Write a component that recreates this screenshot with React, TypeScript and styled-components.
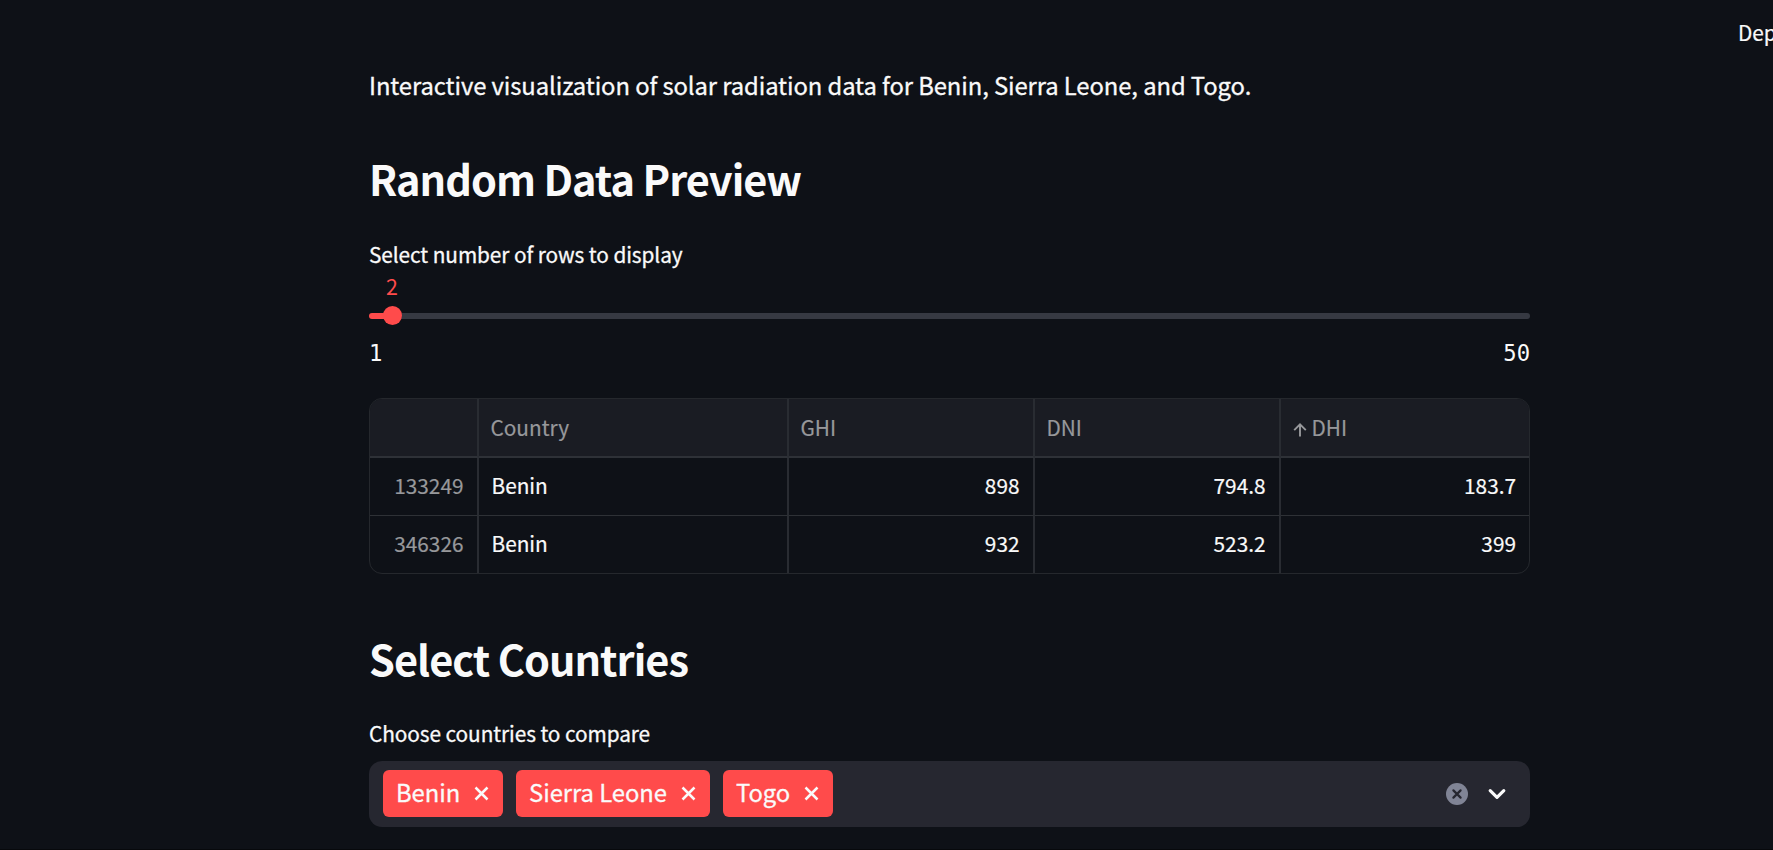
import React from "react";
import styled, { createGlobalStyle } from "styled-components";

const GlobalStyle = createGlobalStyle`
  *, *::before, *::after { box-sizing: border-box; }
  html { overflow: hidden; background: #0e1117; }
  body {
    margin: 0;
    background: #0e1117;
    color: #fafafa;
    font-family: "Noto Sans CJK SC", "Noto Sans", sans-serif;
    -webkit-text-stroke-width: 0.3px;
  }
`;

const Page = styled.div`
  height: 850px;
  overflow: hidden;
  border-bottom: 1px solid #07090c;
`;

const Header = styled.header`
  display: flex;
  justify-content: flex-end;
  height: 64px;
  padding-top: 16px;
`;

const DeployButton = styled.button`
  flex: none;
  width: 72px;
  height: 32px;
  margin-right: -37px;
  padding: 0;
  border: 0;
  background: none;
  color: #fafafa;
  font: 400 20.8px/32px "Noto Sans CJK SC", sans-serif;
  -webkit-text-stroke-width: 0.2px;
  text-align: left;
`;

const Main = styled.main`
  width: 1161px;
  margin-left: 369px;
`;

const Intro = styled.p`
  margin: 0;
  font-size: 23.8px;
  letter-spacing: -0.08px;
  line-height: 42px;
  white-space: nowrap;
`;

const Title = styled.h2<{ $top: number }>`
  margin: ${(p) => p.$top}px 0 0;
  font-size: 41.5px;
  font-weight: 600;
  letter-spacing: -0.97px;
  line-height: 56px;
  white-space: nowrap;
  -webkit-text-stroke-width: 0;
`;

const Field = styled.div<{ $top: number }>`
  margin-top: ${(p) => p.$top}px;
`;

const Label = styled.label`
  display: block;
  font-size: 20.8px;
  letter-spacing: -0.07px;
  line-height: 34px;
  white-space: nowrap;
`;

const SliderValue = styled.output`
  display: block;
  width: 46px;
  text-align: center;
  color: #ff4b4b;
  font-size: 21.4px;
  line-height: 30px;
  -webkit-text-stroke-width: 0;
`;

const Track = styled.div`
  display: flex;
  align-items: center;
  height: 6px;
  margin-top: 12px;
  border-radius: 3px;
  background: linear-gradient(to right, #ff4b4b 24px, #363942 24px);
`;

const Thumb = styled.div`
  width: 19px;
  height: 19px;
  flex: none;
  margin: -1px 0 0 14px;
  border-radius: 50%;
  background: #ff4b4b;
`;

const Bounds = styled.div`
  display: flex;
  justify-content: space-between;
  margin-top: 18px;
  font: 400 22.2px/32px "DejaVu Sans Mono", monospace;
  -webkit-text-stroke-width: 0;
`;

const Table = styled.div`
  display: grid;
  grid-template-columns: 109px 310px 246px 246px 1fr;
  margin-top: 29px;
  border: 1px solid #25282d;
  border-radius: 13px;
  overflow: hidden;
  -webkit-text-stroke-width: 0.2px;
`;

const Cell = styled.div<{ $head?: boolean; $muted?: boolean; $end?: boolean; $lastCol?: boolean; $lastRow?: boolean }>`
  display: flex;
  align-items: center;
  justify-content: ${(p) => (p.$end ? "flex-end" : "flex-start")};
  height: ${(p) => (p.$head ? 59 : p.$lastRow ? 57 : 58)}px;
  padding: 0 ${(p) => (p.$lastCol ? 13 : 13.5)}px ${(p) => (p.$head ? 2 : 3)}px ${(p) => (p.$head ? 11.5 : 12.5)}px;
  border-right: ${(p) => (p.$lastCol ? "0" : "2px solid #292c32")};
  border-bottom: ${(p) => (p.$lastRow ? "0" : p.$head ? "2px solid #2e3137" : "1px solid #2e3136")};
  background: ${(p) => (p.$head ? "#1a1c23" : "transparent")};
  color: ${(p) => (p.$head || p.$muted ? "#97989b" : "#fafafa")};
  font-size: 20.8px;
  line-height: 30px;
  white-space: nowrap;
`;

const SortIcon = styled.svg`
  width: 14px;
  height: 14px;
  margin: 6px 5px 0 0;
`;

const Select = styled.div`
  display: flex;
  align-items: center;
  height: 66px;
  margin-top: 11px;
  padding: 0 21.5px 1px 14px;
  border-radius: 13px;
  background: #262730;
`;

const Tag = styled.span<{ $width: number }>`
  display: flex;
  align-items: center;
  justify-content: space-between;
  width: ${(p) => p.$width}px;
  height: 47px;
  margin-right: 13px;
  padding: 0 14px 0 13px;
  border-radius: 6px;
  background: #ff4b4b;
  color: #fafafa;
  font-size: 23.8px;
  letter-spacing: -0.04px;
  line-height: 34px;
  white-space: nowrap;
`;

const TagText = styled.span`
  padding-bottom: 4px;
`;

const Cross = styled.svg`
  width: 15px;
  height: 15px;
`;

const Clear = styled.svg`
  width: 22px;
  height: 22px;
  margin-left: auto;
`;

const Chevron = styled.svg`
  width: 24px;
  height: 24px;
  margin-left: 17px;
`;

const columns = ["Country", "GHI", "DNI", "DHI"];
const rows = [
  ["133249", "Benin", "898", "794.8", "183.7"],
  ["346326", "Benin", "932", "523.2", "399"],
];
const countries = [
  { name: "Benin", width: 120 },
  { name: "Sierra Leone", width: 194 },
  { name: "Togo", width: 110 },
];

export default function App() {
  return (
    <Page>
      <GlobalStyle />
      <Header>
        <DeployButton>Deploy</DeployButton>
      </Header>
      <Main>
        <Intro>Interactive visualization of solar radiation data for Benin, Sierra Leone, and Togo.</Intro>
        <Title $top={44}>Random Data Preview</Title>
        <Field $top={31}>
          <Label>Select number of rows to display</Label>
          <SliderValue>2</SliderValue>
          <Track>
            <Thumb />
          </Track>
          <Bounds>
            <span>1</span>
            <span>50</span>
          </Bounds>
        </Field>
        <Table>
          <Cell $head />
          {columns.map((c, i) => (
            <Cell key={c} $head $lastCol={i === 3}>
              {c === "DHI" && (
                <SortIcon viewBox="0 0 14 14" fill="none" stroke="currentColor" strokeWidth="1.9">
                  <path d="M7 13.5V1.5M1.2 7.2L7 1.4L12.8 7.2" />
                </SortIcon>
              )}
              {c}
            </Cell>
          ))}
          {rows.map((r, ri) =>
            r.map((v, ci) => (
              <Cell key={`${ri}-${ci}`} $muted={ci === 0} $end={ci !== 1} $lastCol={ci === 4} $lastRow={ri === 1}>
                {v}
              </Cell>
            ))
          )}
        </Table>
        <Title $top={56}>Select Countries</Title>
        <Field $top={30}>
          <Label>Choose countries to compare</Label>
          <Select>
            {countries.map((c) => (
              <Tag key={c.name} $width={c.width}>
                <TagText>{c.name}</TagText>
                <Cross viewBox="0 0 15 15" fill="none" stroke="currentColor" strokeWidth="2.5">
                  <path d="M1.5 1.5L13.5 13.5M13.5 1.5L1.5 13.5" />
                </Cross>
              </Tag>
            ))}
            <Clear viewBox="0 0 22 22" fill="none">
              <circle cx="11" cy="11" r="11" fill="#808495" />
              <path d="M7.4 7.4L14.6 14.6M14.6 7.4L7.4 14.6" stroke="#262730" strokeWidth="2.2" strokeLinecap="round" />
            </Clear>
            <Chevron viewBox="0 0 24 24" fill="none">
              <path d="M5.2 8.7L12 15.4L18.8 8.7" stroke="#fafafa" strokeWidth="3.2" strokeLinecap="round" strokeLinejoin="round" />
            </Chevron>
          </Select>
        </Field>
      </Main>
    </Page>
  );
}
